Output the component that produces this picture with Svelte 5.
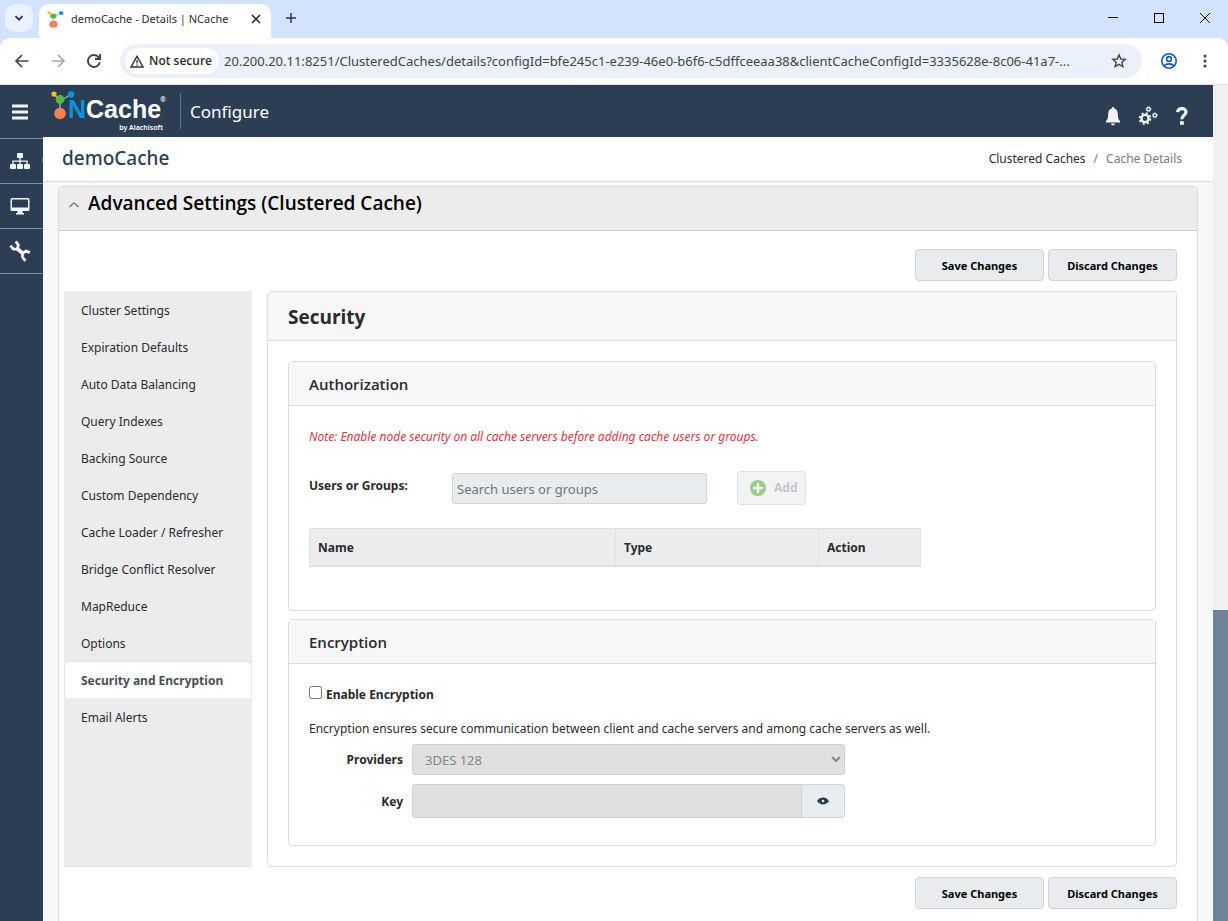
<script lang="ts">
  const sections = [
    "Cluster Settings",
    "Expiration Defaults",
    "Auto Data Balancing",
    "Query Indexes",
    "Backing Source",
    "Custom Dependency",
    "Cache Loader / Refresher",
    "Bridge Conflict Resolver",
    "MapReduce",
    "Options",
    "Security and Encryption",
    "Email Alerts",
  ];

  let active = $state("Security and Encryption");
  let url = $state(
    "20.200.20.11:8251/ClusteredCaches/details?configId=bfe245c1-e239-46e0-b6f6-c5dffceeaa38&clientCacheConfigId=3335628e-8c06-41a7-...",
  );
  let search = $state("");
  let encrypt = $state(false);
  let provider = $state("3DES 128");
</script>

{#snippet molecule()}
  <path d="M9 10 3 3M9 10 19 4M9 10 9 23" stroke="#9fb3c4" stroke-width="1.4" />
  <circle cx="3" cy="3" r="2.6" fill="#fdb913" />
  <circle cx="20" cy="3.5" r="3.2" fill="#0a94dc" />
  <circle cx="9" cy="8.5" r="4.4" fill="#57b947" />
  <circle cx="9" cy="22.5" r="5.8" fill="#f58052" />
{/snippet}

{#snippet formActions()}
  <div class="actions">
    <button class="btn">Save Changes</button>
    <button class="btn">Discard Changes</button>
  </div>
{/snippet}

<div class="browser">
  <div class="tabstrip">
    <button class="tab-search" aria-label="Search tabs">
      <svg width="12" height="12" viewBox="0 0 12 12"><path d="M2.5 4.2 6 7.7 9.5 4.2" fill="none" stroke="#1f2f57" stroke-width="1.8" /></svg>
    </button>
    <div class="tab">
      <svg width="17" height="17" viewBox="0 0 24 29" preserveAspectRatio="none">{@render molecule()}</svg>
      <span class="tab-title">demoCache - Details | NCache</span>
      <button class="bare" aria-label="Close tab">
        <svg width="10" height="10" viewBox="0 0 10 10"><path d="M1 1 9 9M9 1 1 9" stroke="#1f1f1f" stroke-width="1.5" /></svg>
      </button>
    </div>
    <button class="bare new-tab" aria-label="New tab">
      <svg width="10" height="10" viewBox="0 0 10 10"><path d="M5 0V10M0 5H10" stroke="#333" stroke-width="1.5" /></svg>
    </button>
    <div class="window-buttons">
      <button class="bare" aria-label="Minimize"><svg width="12" height="12" viewBox="0 0 12 12"><path d="M1 5.5H11" stroke="#000" /></svg></button>
      <button class="bare" aria-label="Maximize"><svg width="12" height="12" viewBox="0 0 12 12"><rect x="1.5" y="1.5" width="9" height="9" fill="none" stroke="#000" /></svg></button>
      <button class="bare" aria-label="Close"><svg width="12" height="12" viewBox="0 0 12 12"><path d="M1 1 11 11M11 1 1 11" stroke="#000" /></svg></button>
    </div>
  </div>

  <div class="toolbar">
    <div class="nav-buttons">
      <button class="bare" aria-label="Back">
        <svg width="16" height="16" viewBox="0 0 16 16" fill="none" stroke="#444" stroke-width="1.7"><path d="M14.5 8H2.5M8 2 2 8 8 14" /></svg>
      </button>
      <button class="bare" aria-label="Forward">
        <svg width="16" height="16" viewBox="0 0 16 16" fill="none" stroke="#a9a9a9" stroke-width="1.7"><path d="M1.5 8H13.5M8 2 14 8 8 14" /></svg>
      </button>
      <button class="bare" aria-label="Reload">
        <svg width="16" height="16" viewBox="0 0 16 16" fill="none" stroke="#444" stroke-width="1.9"><path d="M13.8 9.2A6 6 0 1 1 12.4 4L14 5.8M14.1 1V6H9" /></svg>
      </button>
    </div>
    <div class="omnibox">
      <button class="security">
        <svg width="14" height="13" viewBox="0 0 14 13" fill="none" stroke="#333"><path d="M7 1.3 13 12H1Z" stroke-width="1.4" /><path d="M7 5V8.5M7 9.4V10.8" stroke-width="1.3" /></svg>
        Not secure
      </button>
      <input class="url" aria-label="Address" bind:value={url} />
      <button class="bare" aria-label="Bookmark this page">
        <svg width="16" height="16" viewBox="0 0 16 16"><path d="M8 1.9 9.8 6 14.2 6.4 10.9 9.3 11.9 13.6 8 11.3 4.1 13.6 5.1 9.3 1.8 6.4 6.2 6Z" fill="none" stroke="#444" stroke-width="1.4" /></svg>
      </button>
    </div>
    <button class="bare profile" aria-label="Profile">
      <svg width="18" height="18" viewBox="0 0 18 18" fill="none" stroke="#0b57d0" stroke-width="1.6"><circle cx="9" cy="9" r="7.2" /><circle cx="9" cy="7" r="2.4" /><path d="M4 14C6.5 11.2 11.5 11.2 14 14" /></svg>
    </button>
    <button class="bare" aria-label="Browser menu">
      <svg width="4" height="14" viewBox="0 0 4 14" fill="#444"><circle cx="2" cy="2" r="1.6" /><circle cx="2" cy="7" r="1.6" /><circle cx="2" cy="12" r="1.6" /></svg>
    </button>
  </div>

  <div class="viewport">
    <div class="app">
      <header class="app-head">
        <button class="bare burger" aria-label="Toggle menu">
          <svg width="16" height="16" viewBox="0 0 16 16"><path d="M0 2H16M0 8H16M0 14H16" stroke="#f3f3f3" stroke-width="3" /></svg>
        </button>
        <a class="brand" href="#home" aria-label="NCache by Alachisoft">
          <svg width="115" height="42" viewBox="0 0 115 42">
            {@render molecule()}
            <text x="17" y="27" class="logo-name"><tspan fill="#0a94dc">N</tspan><tspan fill="#fff">Cache</tspan></text>
            <text x="109" y="11" class="logo-reg">®</text>
            <text x="112" y="39" class="logo-by">by Alachisoft</text>
          </svg>
        </a>
        <span class="product">Configure</span>
        <div class="head-icons">
          <button class="bare" aria-label="Notifications">
            <svg width="16" height="20" viewBox="0 0 16 20" fill="#f3f3f3"><path d="M8 1C8.9 1 9.3 1.6 9.3 2.4 12 3 12.8 5.4 12.8 8 12.8 12 13.6 13.6 15 15V16.4H1V15C2.4 13.6 3.2 12 3.2 8 3.2 5.4 4 3 6.7 2.4 6.7 1.6 7.1 1 8 1ZM6 17.4H10C10 19.8 6 19.8 6 17.4Z" /></svg>
          </button>
          <button class="bare" aria-label="Settings">
            <svg width="20" height="20" viewBox="0 0 20 20" fill="none" stroke="#f3f3f3">
              <circle cx="7" cy="12.5" r="3.6" stroke-width="2.4" />
              <circle cx="7" cy="12.5" r="5.4" stroke-width="1.8" stroke-dasharray="2.12 2.12" />
              <circle cx="10.5" cy="3.2" r="1.7" stroke-width="1.3" />
              <circle cx="10.5" cy="3.2" r="2.5" stroke-width="0.8" stroke-dasharray="1 1" />
              <circle cx="16.8" cy="9.3" r="1.7" stroke-width="1.3" />
              <circle cx="16.8" cy="9.3" r="2.5" stroke-width="0.8" stroke-dasharray="1 1" />
            </svg>
          </button>
          <button class="bare" aria-label="Help">
            <svg width="14" height="20" viewBox="0 0 14 20"><path d="M2.6 6.2C3 1.4 11 1.4 11 6 11 9.4 6.8 9.2 6.8 13.2" fill="none" stroke="#f3f3f3" stroke-width="3.2" /><rect x="5" y="15.2" width="3.8" height="3.6" fill="#f3f3f3" /></svg>
          </button>
        </div>
      </header>

      <div class="app-body">
        <nav class="rail" aria-label="Main">
          <a class="current" href="#clusters" aria-label="Clustered caches">
            <svg width="20" height="17" viewBox="0 0 20 17" fill="#f3f3f3"><rect x="7" y="0" width="6" height="5" rx="1" /><rect x="0" y="11" width="6" height="5" rx="1" /><rect x="7" y="11" width="6" height="5" rx="1" /><rect x="14" y="11" width="6" height="5" rx="1" /><path d="M10 4V12M3 12V8.2H17V12" fill="none" stroke="#f3f3f3" stroke-width="1.3" /></svg>
          </a>
          <a href="#monitor" aria-label="Monitor">
            <svg width="20" height="17" viewBox="0 0 20 17"><path d="M2 0H18Q19.5 0 19.5 1.5V11.5Q19.5 13 18 13H12.5V15H14V16.5H6V15H7.5V13H2Q.5 13 .5 11.5V1.5Q.5 0 2 0ZM2 1.6V9.6H18V1.6Z" fill="#f3f3f3" fill-rule="evenodd" /></svg>
          </a>
          <a href="#tools" aria-label="Tools">
            <svg width="22" height="22" viewBox="0 0 22 22" fill="none" stroke="#f3f3f3"><path d="M8 8.5 14 13.5" stroke-width="3.6" /><path d="M1.4 5.6 4.6 9.2 8.2 9 9.4 5.2 6.8 1.4" stroke-width="2.8" stroke-linejoin="round" /><path d="M20.800 12.600 17.200 11 13.600 13.200 13.400 17 16.400 20.800" stroke-width="2.8" stroke-linejoin="round" /></svg>
          </a>
        </nav>

        <main>
          <div class="page-head">
            <h1>demoCache</h1>
            <nav class="crumbs" aria-label="Breadcrumb">
              <a href="#caches">Clustered Caches</a>
              <span>/</span>
              <span>Cache Details</span>
            </nav>
          </div>

          <section class="card settings">
            <div class="settings-head">
              <button class="bare" aria-label="Collapse">
                <svg width="12" height="12" viewBox="0 0 12 12"><path d="M1.5 8 6 3.8 10.5 8" fill="none" stroke="#68717c" stroke-width="1.3" /></svg>
              </button>
              <h2>Advanced Settings (Clustered Cache)</h2>
            </div>
            <div class="settings-body">
              {@render formActions()}
              <div class="columns">
                <div class="sections">
                  {#each sections as s (s)}
                    <button class="section" class:active={active === s} onclick={() => (active = s)}>{s}</button>
                  {/each}
                </div>

                <div class="card panel">
                  <h3 class="panel-head">Security</h3>
                  <div class="panel-body">
                    <section class="card">
                      <h4 class="sub-head">Authorization</h4>
                      <div class="auth">
                        <p class="note">Note: Enable node security on all cache servers before adding cache users or groups.</p>
                        <div class="search-row">
                          <label for="users">Users or Groups:</label>
                          <input id="users" placeholder="Search users or groups" bind:value={search} />
                          <button class="add" disabled>
                            <svg width="16" height="16" viewBox="0 0 16 16"><circle cx="8" cy="8" r="8" fill="#98ce89" /><path d="M8 3V13M3 8H13" stroke="#f4f8f3" stroke-width="2.4" /></svg>
                            Add
                          </button>
                        </div>
                        <table>
                          <thead>
                            <tr><th class="col-name">Name</th><th class="col-type">Type</th><th>Action</th></tr>
                          </thead>
                        </table>
                      </div>
                    </section>

                    <section class="card">
                      <h4 class="sub-head">Encryption</h4>
                      <div class="enc">
                        <label class="check"><input type="checkbox" bind:checked={encrypt} />Enable Encryption</label>
                        <p>Encryption ensures secure communication between client and cache servers and among cache servers as well.</p>
                        <div class="field">
                          <label for="provider">Providers</label>
                          <select id="provider" bind:value={provider} disabled={!encrypt}>
                            <option>3DES 128</option>
                            <option>3DES 192</option>
                            <option>AES 128</option>
                            <option>AES 256</option>
                          </select>
                        </div>
                        <div class="field">
                          <label for="key">Key</label>
                          <div class="key">
                            <input id="key" type="password" disabled={!encrypt} />
                            <button aria-label="Show key">
                              <svg width="12" height="8" viewBox="0 0 12 8"><path d="M0 4C3-.6 9-.6 12 4 9 8.6 3 8.6 0 4Z" fill="#263c53" /><circle cx="6" cy="4" r="1.3" fill="#e9ecef" /></svg>
                            </button>
                          </div>
                        </div>
                      </div>
                    </section>
                  </div>
                </div>
              </div>
              {@render formActions()}
            </div>
          </section>
        </main>
      </div>
    </div>
    <div class="scrollbar"><div class="thumb"></div></div>
  </div>
</div>

<style>
  .browser {
    display: flex;
    flex-direction: column;
    height: 100vh;
    overflow: hidden;
    font: 12px/22px "Noto Sans", "Open Sans", sans-serif;
    color: #292b2c;
    background: #d3e3fd;
  }
  .browser *,
  .browser {
    box-sizing: border-box;
  }
  button,
  input,
  select {
    margin: 0;
    font: inherit;
    color: inherit;
  }
  svg {
    display: block;
    flex: none;
  }
  h1,
  h2,
  h3,
  h4,
  p {
    margin: 0;
  }
  a {
    color: inherit;
    text-decoration: none;
  }
  .bare {
    padding: 0;
    background: none;
    border: none;
    cursor: pointer;
  }

  /* browser chrome */
  .tabstrip {
    display: flex;
    flex: none;
    height: 38px;
    padding: 4px 17px 0 5px;
  }
  .tab-search {
    display: grid;
    place-items: center;
    width: 28px;
    height: 28px;
    padding: 0;
    background: #ebf2fe;
    border: none;
    border-radius: 10px;
  }
  .tab {
    display: flex;
    align-items: center;
    gap: 7px;
    width: 232px;
    margin-left: 6px;
    padding: 0 10px 4px 8px;
    background: #fff;
    border-radius: 10px 10px 0 0;
  }
  .tab-title {
    flex: 1;
    white-space: nowrap;
    font-size: 11px;
  }
  .new-tab {
    height: 28px;
    margin-left: 15px;
  }
  .window-buttons {
    display: flex;
    gap: 34px;
    height: 28px;
    margin-left: auto;
  }
  .toolbar {
    display: flex;
    flex: none;
    align-items: center;
    height: 47px;
    padding: 0 21px 0 14px;
    background: #fff;
    border-bottom: 1px solid #dde3dd;
    border-radius: 10px 10px 0 0;
  }
  .nav-buttons {
    display: flex;
    gap: 20px;
    margin-right: 18px;
  }
  .omnibox {
    display: flex;
    flex: 1;
    align-items: center;
    gap: 5px;
    min-width: 0;
    height: 34px;
    padding: 0 15px 0 5px;
    background: #ebf1fb;
    border-radius: 17px;
  }
  .security {
    display: flex;
    align-items: center;
    gap: 5px;
    height: 26px;
    padding: 0 7px 0 5px;
    background: #fff;
    border: none;
    border-radius: 13px;
    font: 600 12px/20px "Open Sans", sans-serif;
    white-space: nowrap;
  }
  .url {
    flex: 1;
    min-width: 0;
    margin-right: 10px;
    padding: 0;
    color: #444;
    background: none;
    border: none;
    font-size: 13px;
    text-overflow: ellipsis;
  }
  .profile {
    margin: 0 25px 0 18px;
  }

  .viewport {
    display: flex;
    flex: 1;
    min-height: 0;
  }
  .scrollbar {
    display: flex;
    flex-direction: column;
    justify-content: flex-end;
    width: 15px;
    background: #f0f0f0;
  }
  .thumb {
    height: 37.2%;
    background: #6f849b;
  }

  /* application shell */
  .app {
    display: flex;
    flex: 1;
    flex-direction: column;
    min-width: 0;
    background: #f7f7f7;
  }
  .app-head {
    display: flex;
    flex: none;
    align-items: center;
    height: 52px;
    padding: 0 24px 0 12px;
    color: #fff;
    background: #2b3e53;
  }
  .burger {
    padding-top: 2px;
  }
  .brand {
    margin: 0 14px 0 23px;
    padding-top: 2px;
  }
  .brand svg {
    overflow: visible;
  }
  .logo-name {
    font: bold 25px "Liberation Sans", Arial, sans-serif;
  }
  .logo-reg,
  .logo-by {
    font-size: 7px;
    font-weight: 600;
    text-anchor: end;
    fill: #fff;
  }
  .logo-reg {
    text-anchor: start;
  }
  .product {
    padding: 6px 0 4px 9px;
    border-left: 1px solid #4c78a3;
    font-size: 17px;
    line-height: 26px;
  }
  .head-icons {
    display: flex;
    align-items: center;
    gap: 17px;
    margin: 10px 0 0 auto;
  }
  .app-body {
    display: flex;
    flex: 1;
    min-height: 0;
  }
  .rail {
    flex: none;
    width: 43px;
    padding-top: 1px;
    background: #2b3e53;
  }
  .rail a {
    display: grid;
    place-items: center;
    height: 45px;
    padding-right: 3px;
    border-top: 1px solid #7d93a9;
  }
  .rail a:last-child {
    height: 46px;
    border-bottom: 1px solid #7d93a9;
  }
  /* marker on the rail's right edge */
  .rail .current {
    position: relative;
  }
  .rail .current::after {
    content: "";
    position: absolute;
    top: 19px;
    right: 0;
    width: 1px;
    height: 4px;
    background: #1e95ee;
  }
  main {
    flex: 1;
    min-width: 0;
    overflow: hidden;
  }
  .page-head {
    display: flex;
    align-items: center;
    justify-content: space-between;
    height: 45px;
    padding: 0 31px 2px 19px;
    background: #fff;
    border-bottom: 1px solid #dcdcdc;
  }
  h1 {
    color: #2b3e53;
    font-size: 19px;
    font-weight: 500;
  }
  .crumbs {
    display: flex;
    gap: 8px;
    padding-top: 2px;
    color: #737b83;
  }
  .crumbs a {
    color: #292b2c;
  }

  /* cards */
  .card {
    background: #fff;
    border: 1px solid #dcdcdc;
    border-radius: 4px;
  }
  .settings {
    margin: 4px 15px;
  }
  .settings-head {
    display: flex;
    gap: 8px;
    height: 44px;
    padding: 3px 9px;
    background: #ececec;
    border-bottom: 1px solid #ccc;
  }
  .settings-head .bare {
    height: 26px;
    padding-top: 4px;
  }
  h2 {
    color: #000;
    font: 600 19px/26px "Open Sans", sans-serif;
  }
  .settings-body {
    padding: 18px 20px 18px 5px;
  }
  .actions {
    display: flex;
    justify-content: flex-end;
    gap: 4px;
  }
  .btn {
    width: 129px;
    height: 32px;
    padding: 2px 0 0;
    color: #000;
    background: #e9ecef;
    border: 1px solid #ced4da;
    border-radius: 4px;
    font-size: 11px;
    font-weight: 700;
  }
  .btn:hover {
    background: #dde2e7;
  }
  .columns {
    display: flex;
    gap: 15px;
    margin: 10px 0;
  }
  .sections {
    flex: none;
    width: 188px;
    background: #ececec;
    border-bottom: 1px solid #dcdfe3;
  }
  .section {
    display: block;
    width: 100%;
    height: 37px;
    padding: 2px 16px 0;
    text-align: left;
    white-space: nowrap;
    background: none;
    border: 1px solid transparent;
    border-bottom: none;
    border-radius: 4px 4px 0 0;
    cursor: pointer;
  }
  .section.active {
    color: #495057;
    background: #fff;
    border-color: #dee2e6;
    font-weight: 700;
  }
  .panel {
    flex: 1;
    min-width: 0;
  }
  .panel-head {
    height: 49px;
    padding: 0 20px;
    background: #f7f7f7;
    border-bottom: 1px solid #dcdcdc;
    font: 700 19px/50px "Open Sans", sans-serif;
  }
  .panel-body {
    display: flex;
    flex-direction: column;
    gap: 8px;
    padding: 20px;
  }
  .sub-head {
    height: 44px;
    padding: 0 20px;
    background: #f7f7f7;
    border-bottom: 1px solid #dcdcdc;
    font: 600 15px/44px "Open Sans", sans-serif;
  }
  .auth {
    padding: 20px 20px 43px;
  }
  .note {
    color: #dc3545;
    font-style: italic;
  }
  .search-row {
    display: flex;
    align-items: center;
    margin: 23px 0;
  }
  .search-row label {
    width: 143px;
    padding-bottom: 4px;
    font-weight: 700;
  }
  .search-row input {
    width: 255px;
    height: 31px;
    margin-right: 30px;
    padding: 2px 4px 0;
    background: #e9ecef;
    border: 1px solid #ced4da;
    border-radius: 3px;
    font-size: 13px;
  }
  .search-row input::placeholder {
    color: #6c757d;
    opacity: 1;
  }
  .add {
    display: flex;
    align-items: center;
    gap: 8px;
    width: 69px;
    height: 34px;
    padding: 0 12px;
    color: #c4c7ca;
    background: #f2f3f5;
    border: 1px solid #dfe3e7;
    border-radius: 3px;
    font-weight: 700;
  }
  table {
    width: 612px;
    table-layout: fixed;
    border-collapse: collapse;
  }
  th {
    height: 37px;
    padding: 2px 8px 0;
    text-align: left;
    background: #ececec;
    border: 1px solid #dee2e6;
    border-bottom-width: 2px;
  }
  .col-name {
    width: 306px;
  }
  .col-type {
    width: 203px;
  }
  .enc {
    padding: 20px 20px 27px;
  }
  .check {
    display: flex;
    align-items: center;
    gap: 4px;
    margin-bottom: 12px;
    font-weight: 700;
  }
  .check input {
    width: 13px;
    height: 13px;
    margin-bottom: 4px;
  }
  .field {
    display: flex;
    align-items: center;
  }
  .field + .field {
    margin-top: 9px;
  }
  p + .field {
    margin-top: 4px;
  }
  .field > label {
    width: 94px;
    margin-right: 9px;
    padding-top: 2px;
    text-align: right;
    font-weight: 700;
  }
  .field select,
  .key {
    width: 433px;
  }
  .field select {
    height: 31px;
    padding: 2px 8px 0;
    color: #868686;
    background: #e0e0e0;
    border: 1px solid #ced0d2;
    border-radius: 3px;
    font-size: 13px;
    opacity: 1;
  }
  .key {
    display: flex;
    height: 34px;
  }
  .key input {
    flex: 1;
    min-width: 0;
    background: #e0e0e0;
    border: 1px solid #ced0d2;
    border-radius: 3px 0 0 3px;
  }
  .key button {
    display: grid;
    place-items: center;
    width: 43px;
    padding: 0;
    background: #e9ecef;
    border: 1px solid #ced4da;
    border-left: none;
    border-radius: 0 4px 4px 0;
  }
</style>
